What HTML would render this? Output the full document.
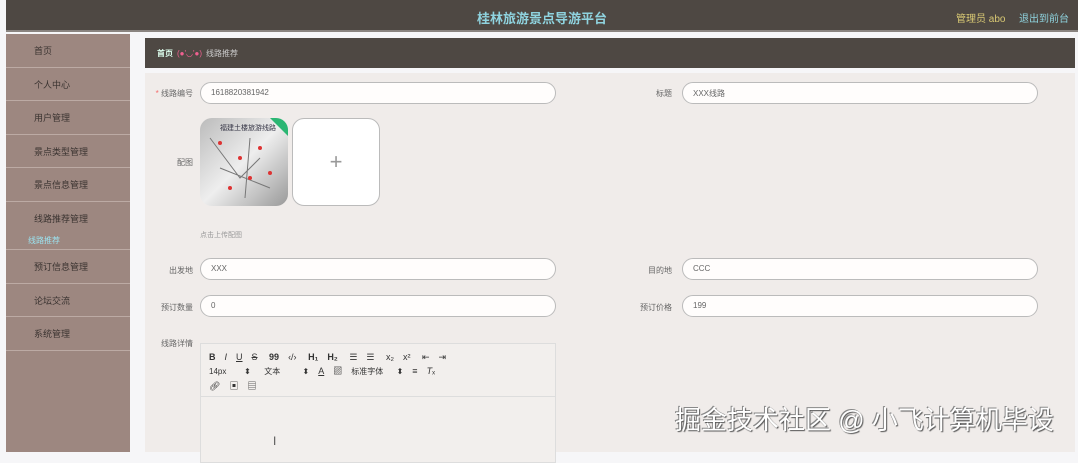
<!DOCTYPE html>
<html><head><meta charset="utf-8"><style>
*{margin:0;padding:0;box-sizing:border-box}
body{width:1078px;height:452px;overflow:hidden;background:#f6f6f8;font-family:"Liberation Sans","Noto Sans CJK SC",sans-serif;font-size:9px;color:#555;position:relative}
.hdr{position:absolute;left:6px;top:0;width:1072px;height:32px;background:#4e4843;border-bottom:2px solid #8a8480}
.hdr .t{position:absolute;left:0;right:0;top:8px;text-align:center;color:#8fd3df;font-size:13px;font-weight:bold}
.hdr .u{position:absolute;left:950px;top:10px;color:#d8c873;font-size:10px}
.hdr .o{position:absolute;left:1013px;top:10px;color:#8fd3df;font-size:10px}
.side{position:absolute;left:6px;top:34px;width:124px;height:418px;background:#9d8780}
.side div{height:33.5px;border-bottom:1px solid #bcaaa4;padding:10px 0 0 28px;color:#3a3330;font-size:9px}
.side .sub{height:18px;border:none;padding:0 0 0 22px;color:#9be3f0;font-size:8px}
.crumb{position:absolute;left:145px;top:38px;width:930px;height:30px;background:#4e4843;padding:10px 12px;font-size:8px;color:#ccc}
.crumb b{color:#dfe;font-weight:bold}.crumb i{color:#f06090;font-style:normal;margin:0 4px}
.panel{position:absolute;left:145px;top:73px;width:930px;height:379px;background:#f0ecea}
.lab{position:absolute;font-size:8px;color:#666;text-align:right;width:60px}
.inp{position:absolute;height:22px;border:1px solid #bbb;border-radius:11px;background:#fffdfc;padding:5px 10px;font-size:8px;color:#666}
.ed{position:absolute;left:55px;top:270px;width:356px;height:120px;border:1px solid #ddd;background:#f2efed}
.ed .tb{height:53px;border-bottom:1px solid #ddd;padding:6px 8px;font-size:9px;color:#333;line-height:14px}
.ed span{margin-right:9px}
</style></head><body>
<div class="hdr"><div class="t">桂林旅游景点导游平台</div><div class="u">管理员 abo</div><div class="o">退出到前台</div></div>
<div class="side">
<div>首页</div><div>个人中心</div><div>用户管理</div><div>景点类型管理</div><div>景点信息管理</div>
<div style="border:none">线路推荐管理</div><div class="sub" style="border-bottom:1px solid #bcaaa4;height:15px">线路推荐</div>
<div>预订信息管理</div><div>论坛交流</div><div>系统管理</div>
</div>
<div class="crumb"><b>首页</b><i>(●'◡'●)</i>线路推荐</div>
<div class="panel">
<div class="lab" style="left:-12px;top:15px"><span style="color:#f56c6c">*</span> 线路编号</div>
<div class="inp" style="left:55px;top:9px;width:356px">1618820381942</div>
<div class="lab" style="left:467px;top:15px">标题</div>
<div class="inp" style="left:537px;top:9px;width:356px">XXX线路</div>
<div class="lab" style="left:-12px;top:84px">配图</div>
<div style="position:absolute;left:55px;top:45px;width:88px;height:88px;border-radius:12px;background:linear-gradient(135deg,#bbb,#eee 50%,#999);overflow:hidden">
<svg width="88" height="88"><path d="M70 0L88 0L88 18Z" fill="#2bb673"/><path d="M10 20L40 60L60 40M20 50L70 70M50 20L45 80" stroke="#777" fill="none"/><g fill="#d33"><circle cx="20" cy="25" r="2"/><circle cx="40" cy="40" r="2"/><circle cx="60" cy="30" r="2"/><circle cx="50" cy="60" r="2"/><circle cx="30" cy="70" r="2"/><circle cx="70" cy="55" r="2"/></g><text x="20" y="12" font-size="7" fill="#334">福建土楼旅游线路</text></svg></div>
<div style="position:absolute;left:147px;top:45px;width:88px;height:88px;border-radius:12px;background:#fff;border:1px solid #bbb;text-align:center;line-height:86px;font-size:22px;color:#999;font-weight:200">+</div>
<div style="position:absolute;left:55px;top:157px;font-size:7px;color:#999">点击上传配图</div>
<div class="lab" style="left:-12px;top:192px">出发地</div>
<div class="inp" style="left:55px;top:185px;width:356px">XXX</div>
<div class="lab" style="left:467px;top:192px">目的地</div>
<div class="inp" style="left:537px;top:185px;width:356px">CCC</div>
<div class="lab" style="left:-12px;top:229px">预订数量</div>
<div class="inp" style="left:55px;top:222px;width:356px">0</div>
<div class="lab" style="left:467px;top:229px">预订价格</div>
<div class="inp" style="left:537px;top:222px;width:356px">199</div>
<div class="lab" style="left:-12px;top:265px">线路详情</div>
<div class="ed"><div class="tb"><span><b>B</b></span><span><i>I</i></span><span><u>U</u></span><span><s>S</s></span><span>&nbsp;<b>99</b></span><span>‹/›</span><span>&nbsp;<b>H₁</b></span><span><b>H₂</b></span><span>&nbsp;☰</span><span>☰</span><span>&nbsp;x₂</span><span>x²</span><span>&nbsp;⇤</span><span>⇥</span><br>
<span style="font-size:8px">14px&nbsp;&nbsp;&nbsp;&nbsp;&nbsp;&nbsp;&nbsp;&nbsp;⬍</span><span style="font-size:8px">&nbsp;&nbsp;文本&nbsp;&nbsp;&nbsp;&nbsp;&nbsp;&nbsp;&nbsp;&nbsp;&nbsp;&nbsp;⬍</span><span><u>A</u></span><span>▨</span><span style="font-size:8px">标准字体&nbsp;&nbsp;&nbsp;&nbsp;&nbsp;&nbsp;⬍</span><span>≡</span><span><i>T</i>ₓ</span><br>
<span>🔗︎</span><span>▣</span><span>▤</span></div>
<div style="position:absolute;left:72px;top:90px;font-size:12px;color:#555">I</div></div>
<div style="position:absolute;left:530px;top:327px;font-size:26px;color:#fff;white-space:nowrap;text-shadow:1px 1px 1px #555,-1px -1px 0 #888">掘金技术社区 @ 小飞计算机毕设</div>
</div>
</body></html>
